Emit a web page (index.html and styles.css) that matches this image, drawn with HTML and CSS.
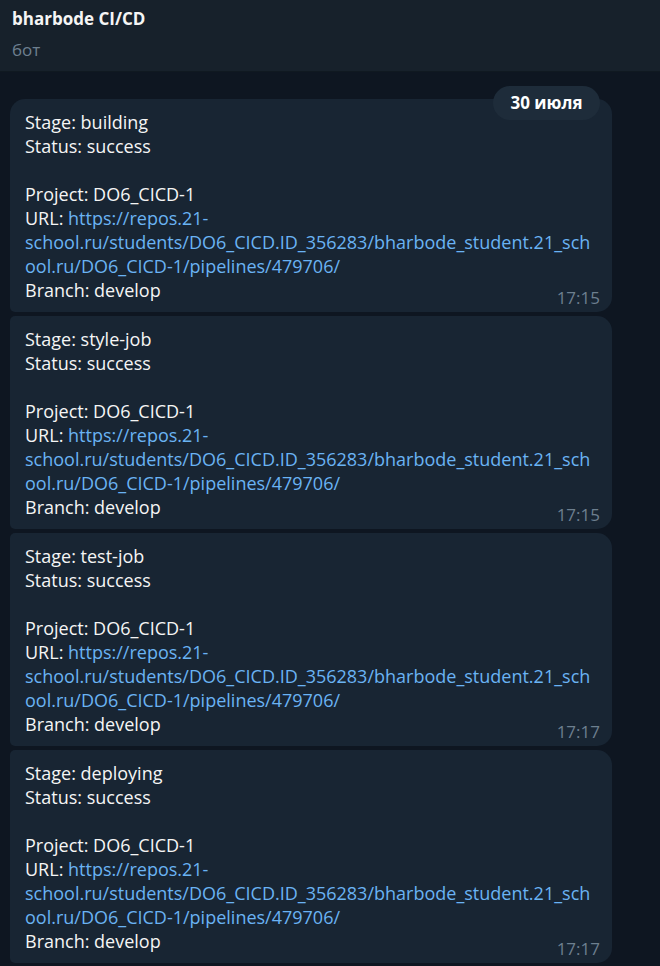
FILE: index.html
```html
<!DOCTYPE html>
<html lang="ru">
<head>
<meta charset="utf-8">
<title>bharbode CI/CD</title>
<link rel="stylesheet" href="styles.css">
</head>
<body>
<header class="topbar">
  <div class="title">bharbode CI/CD</div>
  <div class="subtitle">бот</div>
</header>
<main class="chat">
  <div class="date-badge">30 июля</div>
  <div class="group">
    <div class="msg first">
      <div class="text">Stage: building<br>Status: success<br><br>Project: DO6_CICD-1<br>URL: <a class="link">https://repos.21-school.ru/students/DO6_CICD.ID_356283/bharbode_student.21_school.ru/DO6_CICD-1/pipelines/479706/</a><br>Branch: develop</div>
      <span class="time">17:15</span>
    </div>
    <div class="msg">
      <div class="text">Stage: style-job<br>Status: success<br><br>Project: DO6_CICD-1<br>URL: <a class="link">https://repos.21-school.ru/students/DO6_CICD.ID_356283/bharbode_student.21_school.ru/DO6_CICD-1/pipelines/479706/</a><br>Branch: develop</div>
      <span class="time">17:15</span>
    </div>
    <div class="msg">
      <div class="text">Stage: test-job<br>Status: success<br><br>Project: DO6_CICD-1<br>URL: <a class="link">https://repos.21-school.ru/students/DO6_CICD.ID_356283/bharbode_student.21_school.ru/DO6_CICD-1/pipelines/479706/</a><br>Branch: develop</div>
      <span class="time">17:17</span>
    </div>
    <div class="msg last">
      <div class="text">Stage: deploying<br>Status: success<br><br>Project: DO6_CICD-1<br>URL: <a class="link">https://repos.21-school.ru/students/DO6_CICD.ID_356283/bharbode_student.21_school.ru/DO6_CICD-1/pipelines/479706/</a><br>Branch: develop</div>
      <span class="time">17:17</span>
    </div>
  </div>
</main>
</body>
</html>
```
FILE: styles.css
```css
html, body {
  margin: 0;
  padding: 0;
}
body {
  width: 660px;
  height: 966px;
  overflow: hidden;
  background: #0e1621;
  font-family: "Open Sans", "Noto Sans", sans-serif;
  color: #f5f5f5;
}
.topbar {
  height: 72px;
  box-sizing: border-box;
  background: #17212b;
  border-bottom: 1px solid #101921;
  padding: 5px 12px 0;
}
.title {
  font-size: 17px;
  font-weight: 700;
  line-height: 28px;
  color: #f5f5f5;
}
.subtitle {
  font-size: 17px;
  line-height: 24px;
  margin-top: 5px;
  color: #6d7f8f;
}
.chat {
  position: relative;
  padding: 27px 0 0 10px;
}
.date-badge {
  position: absolute;
  top: 14px;
  left: 493px;
  width: 107px;
  height: 34px;
  box-sizing: border-box;
  border-radius: 17px;
  background: #1e2c3a;
  color: #ffffff;
  font-size: 17px;
  font-weight: 700;
  line-height: 34px;
  text-align: center;
  z-index: 2;
}
.group {
  display: flex;
  flex-direction: column;
  gap: 4px;
  width: 602px;
}
.msg {
  position: relative;
  background: #182533;
  border-radius: 5px 15px 15px 5px;
  padding: 11px 16px 10px 15px;
}
.msg.first {
  border-top-left-radius: 15px;
}
.text {
  font-size: 18px;
  line-height: 24px;
  overflow-wrap: anywhere;
}
.link {
  color: #6ab3f3;
  text-decoration: none;
}
.time {
  position: absolute;
  right: 12px;
  bottom: 4px;
  font-size: 17px;
  line-height: 20px;
  color: #6d7f8f;
}
```
